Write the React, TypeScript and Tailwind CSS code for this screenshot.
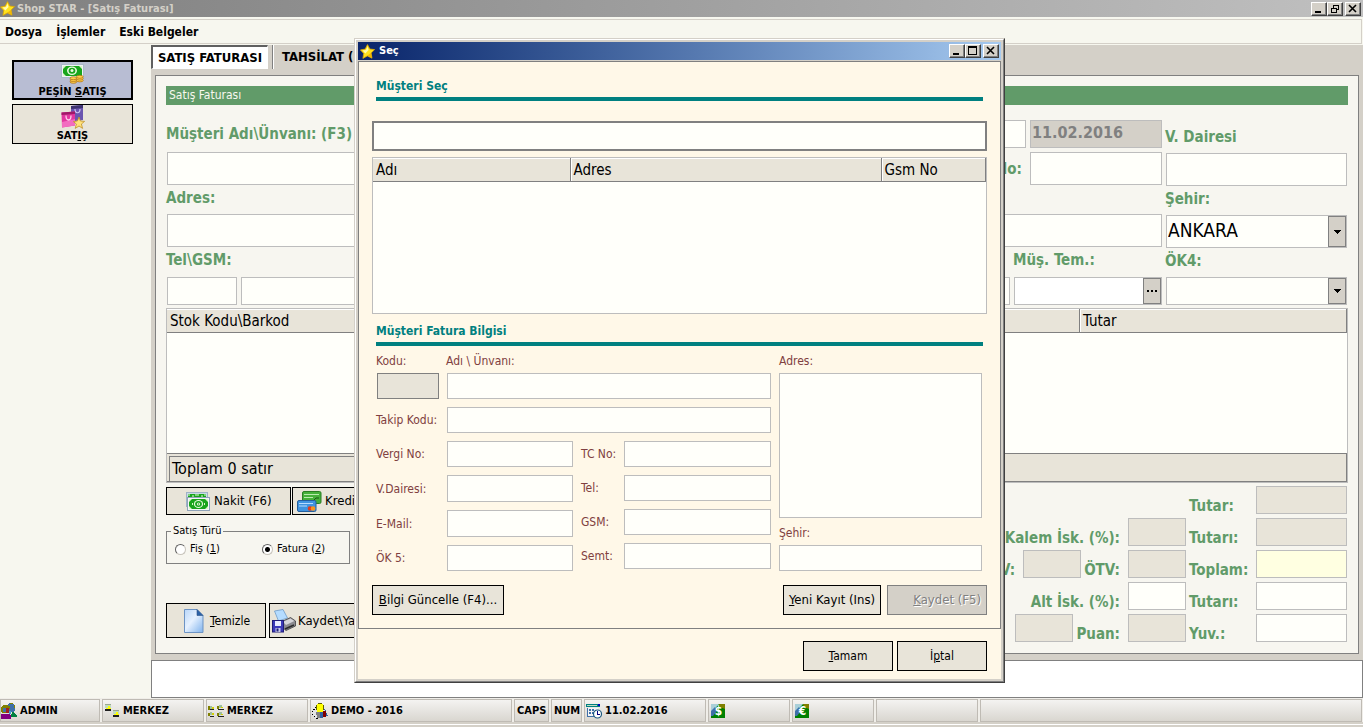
import { useState } from 'react';
import type { ReactNode } from 'react';
import clsx from 'clsx';

const FIELD = 'block min-w-0 rounded-none border border-[#bdbdbd] bg-[#fffffa] px-1 outline-none';
const FIELD_DISABLED = 'block min-w-0 rounded-none border border-[#bdbdbd] bg-[#e8e4d9] px-1 outline-none';
const GREEN = 'text-[15px] leading-4 font-bold whitespace-nowrap text-[#619b69]';
const BROWN = 'block text-xs leading-4 whitespace-nowrap text-[#804040]';
const PUSH = 'flex items-center border border-black bg-[#e8e4d9] whitespace-nowrap';

/* ---------- icons ---------- */

function StarIcon() {
  return (
    <svg width="15" height="15" viewBox="0 0 15 15" className="shrink-0">
      <path d="M7.5 0.6 9.8 5 14.6 5.6 11.1 9 12 14.2 7.4 11.9 2.9 14.4 3.7 9.4 0.4 5.9 5.2 5.1Z" fill="#ffe21c" stroke="#d9a406" strokeWidth="0.8" />
      <path d="M7.4 2.4 8.6 6 5.4 9.4 2.6 6.6 6 6.1Z" fill="#fffbb0" />
      <path d="M11 9 11.8 13.8 7.4 11.6Z" fill="#f2b705" />
    </svg>
  );
}

function CashCoinsIcon() {
  return (
    <svg width="23" height="20" viewBox="0 0 23 20" className="mb-px shrink-0">
      <rect x="0.5" y="0.5" width="22" height="13" fill="#eef3f4" stroke="#a9b7c9" />
      <rect x="2" y="2" width="19" height="10" fill="#18a51c" />
      <path d="M2 2h3L2 5zM21 2h-3l3 3zM2 12h3L2 9z" fill="#d8f5c8" />
      <ellipse cx="11" cy="6.8" rx="5" ry="4.2" fill="#e9fbe0" />
      <ellipse cx="11" cy="6.8" rx="3.4" ry="3" fill="#18a51c" />
      <circle cx="11" cy="6.6" r="1.5" fill="#e9fbe0" />
      <g fill="#ffcf4a" stroke="#a86a14" strokeWidth="0.7">
        <ellipse cx="12.4" cy="17.8" rx="3.4" ry="1.5" />
        <ellipse cx="12.4" cy="16" rx="3.4" ry="1.5" />
        <ellipse cx="12.4" cy="14.2" rx="3.4" ry="1.5" />
        <ellipse cx="18.8" cy="16.4" rx="3.4" ry="1.5" />
        <ellipse cx="18.8" cy="14.6" rx="3.4" ry="1.5" />
        <ellipse cx="18.8" cy="12.8" rx="3.4" ry="1.5" />
      </g>
    </svg>
  );
}

function BagsIcon() {
  return (
    <svg width="24" height="24" viewBox="0 0 24 24" className="shrink-0">
      <path d="M10 1 22 0v15l-8 1-4-8z" fill="#6a55b0" />
      <path d="M10 1 22 0v3L10 4z" fill="#3d3370" />
      <path d="M14 4c0 5 5 5 5 0" fill="none" stroke="#cfc4f0" strokeWidth="1.2" />
      <path d="M0.5 7.5 14 6.5v14L1 22.5z" fill="#e2369f" />
      <path d="M0.5 7.5 14 6.5v2.6L0.5 10z" fill="#a01868" />
      <path d="M1 17 14 14v6.5L1 22.5z" fill="#f26cc0" />
      <path d="M5 10.5c0 6 5 6 5 0" fill="none" stroke="#ffd0ee" strokeWidth="1.3" />
      <path d="M18 12 19.4 16 23.6 16.4 20.4 19 21.6 23.4 18 21 14.2 23.4 15.4 19 12.4 16.6 16.4 16Z" fill="#ffe27a" stroke="#c0902a" strokeWidth="0.8" />
    </svg>
  );
}

function BanknoteIcon() {
  return (
    <svg width="24" height="19" viewBox="0 0 24 19" className="shrink-0">
      <rect x="0.5" y="0.5" width="21" height="14" fill="#c9dbe6" stroke="#9fb2c6" />
      <rect x="2" y="2" width="18" height="4" fill="#18a51c" />
      <path d="M2 3h2M6 4h2M9 3h4M15 4h2M18 3h2" stroke="#e5fbdc" />
      <rect x="1.5" y="5.5" width="22" height="13" fill="#f4f7f7" stroke="#8fa2b8" />
      <rect x="3" y="7" width="19" height="10" fill="#18a51c" />
      <path d="M3 7h3L3 10zM22 7h-3l3 3zM3 17h3L3 14zM22 17h-3l3-3zM6 11h1v2H6zM18 11h1v2h-1z" fill="#d8f5c8" />
      <ellipse cx="12.5" cy="12" rx="4.6" ry="4" fill="#e9fbe0" />
      <ellipse cx="12.5" cy="12" rx="3.4" ry="3" fill="#18a51c" />
      <circle cx="12.5" cy="12" r="1.6" fill="#e9fbe0" />
      <circle cx="12.5" cy="12" r="0.7" fill="#18a51c" />
    </svg>
  );
}

function CardsIcon() {
  return (
    <svg width="25" height="21" viewBox="0 0 25 21" className="shrink-0">
      <rect x="5.5" y="0.5" width="18.5" height="12" rx="1.5" fill="#45b03a" stroke="#2a7d24" />
      <path d="M7 3.5h15M7 6.5h9" stroke="#b9ecae" />
      <path d="m17 9 2-2h3" stroke="#1b5717" fill="none" />
      <rect x="0.5" y="9.5" width="18.5" height="11" rx="1.5" fill="#3f93e0" stroke="#245f9e" />
      <path d="M2 12.5h14M2 15h8" stroke="#b7dcff" />
      <circle cx="13" cy="17.5" r="2.3" fill="#e23a1c" />
      <circle cx="16" cy="17.5" r="2.3" fill="#f7941d" />
    </svg>
  );
}

function PageIcon() {
  return (
    <svg width="20" height="24" viewBox="0 0 20 24" className="shrink-0">
      <defs>
        <linearGradient id="page" x1="0" y1="0" x2="1" y2="1">
          <stop offset="0" stopColor="#b9d6f8" />
          <stop offset="0.45" stopColor="#e6f1ff" />
          <stop offset="1" stopColor="#7fb2ec" />
        </linearGradient>
      </defs>
      <path d="M0.5 0.5H13l6 6v17H0.5z" fill="url(#page)" stroke="#6d93c4" />
      <path d="M13 0.5v6h6z" fill="#2b62a8" stroke="#2b5288" strokeWidth="0.6" />
    </svg>
  );
}

function SavePrintIcon() {
  return (
    <svg width="24" height="24" viewBox="0 0 24 24" className="shrink-0">
      <path d="M2.5 2 11 0.5 15.5 9l-9 3z" fill="#b5dcff" stroke="#6f9bc8" strokeWidth="0.8" />
      <path d="M10 12.5 18.5 8.5 23.5 12v5L14 21.5 10 18z" fill="#8b8b90" stroke="#3d3d40" strokeWidth="0.8" />
      <path d="M11 12.8 18.5 9.4 22.4 12 14 16z" fill="#d5d5da" />
      <path d="m13 20 9-4" stroke="#2b2b2b" strokeWidth="1.4" />
      <rect x="0.5" y="11.5" width="11" height="11.5" fill="#3b39b8" stroke="#1f1d78" />
      <rect x="3" y="12" width="6" height="5" fill="#e8ecff" />
      <rect x="3.5" y="19" width="5" height="4" fill="#c7cbe8" />
      <rect x="4.5" y="19.5" width="2" height="3" fill="#1f1d78" />
    </svg>
  );
}

function UsersIcon() {
  return (
    <svg width="16" height="16" viewBox="0 0 16 16" shapeRendering="crispEdges" className="shrink-0">
      <path d="M8 0h4l2 3v4l-2 2H9L7 6V2z" fill="#3f6fa8" />
      <path d="M9 0h3v1H9zM13 2h1v3h-1zM8 3h1v3H8z" fill="#808000" />
      <path d="M11 9h2l3 4v1h-6z" fill="#008040" />
      <path d="M0 4 3 2h3l2 2v3l-3 3H1L0 8z" fill="#808000" />
      <path d="M5 5h3v5H5z" fill="#a02020" />
      <path d="M2 5h3v4H2z" fill="#3f6fa8" />
      <path d="M8 8h2v3H8z" fill="#40a0d0" />
      <path d="M0 11h8l2 2v3H0z" fill="#800080" />
    </svg>
  );
}

function TwoHostsIcon() {
  return (
    <svg width="16" height="16" viewBox="0 0 16 16" shapeRendering="crispEdges" className="shrink-0">
      <path d="M1 1h6v4H1zM9 7h6v4H9z" fill="#c0dcc0" />
      <path d="M4 3h2v2H4zM12 9h2v2h-2z" fill="#ffff00" />
      <path d="M1 1h6v1H1zM9 7h6v1H9z" fill="#9aa890" />
      <path d="M1 6h6v2H1zM9 12h6v2H9z" fill="#202020" />
      <path d="M2 5h5v1H2zM10 11h5v1h-5z" fill="#ffff00" />
    </svg>
  );
}

function FourHostsIcon() {
  return (
    <svg width="16" height="12" viewBox="0 0 16 12" shapeRendering="crispEdges" className="shrink-0">
      <path d="M0 1h2v4H0zM9 1h2v3H9zM0 8h2v3H0zM9 8h2v3H9z" fill="#808000" />
      <path d="M2 1h2v3H2zM11 0h3v3h-3zM2 7h2v3H2zM11 7h3v3h-3z" fill="#9fc0a0" />
      <path d="M4 2h2v2H4zM13 2h2v1h-2zM4 8h2v2H4zM13 9h2v1h-2z" fill="#d0d000" />
      <path d="M2 4h4v1H2zM10 4h6v1h-6zM2 11h4v1H2zM10 11h6v1h-6z" fill="#202020" />
    </svg>
  );
}

function CubeIcon() {
  return (
    <svg width="16" height="16" viewBox="0 0 16 16" shapeRendering="crispEdges" className="shrink-0">
      <path d="M1 7h4l3 3v5H3L0 12z" fill="#e4e4e4" />
      <path d="M0 8h1v1H0zM0 11h1v1H0zM1 6h2v1H1zM3 4h1v1H3zM2 13h1v1H2zM4 15h2v1H4z" fill="#000" />
      <path d="M4 9h5v6H5z" fill="#808080" />
      <path d="M8 9h3v6H8z" fill="#3060a0" />
      <path d="M11 8h3v6h-3z" fill="#800000" />
      <path d="M12 6h1l3 7h-2V9z" fill="#3060a0" />
      <path d="M5 1h6v8H5z" fill="#ffff00" />
      <path d="M6 0h4v1H6zM4 2h1v5H4zM11 2h1v5h-1z" fill="#606000" />
    </svg>
  );
}

function CalendarIcon() {
  return (
    <svg width="16" height="16" viewBox="0 0 16 16" shapeRendering="crispEdges" className="shrink-0">
      <path d="M0 1h14v3H0z" fill="#008080" />
      <path d="M1 2h10v1H1z" fill="#c0dcc0" />
      <path d="M12 1h2v2h-2z" fill="#0000c0" />
      <path d="M1 5h11v9H1z" fill="#f4f4f4" />
      <path d="M1 5h1v9H1zM1 13h9v1H1zM3 6h2v2H3zM6 6h2v2H6zM3 9h2v2H3zM6 9h2v2H6z" fill="#3f6fa8" />
      <circle cx="11.5" cy="11" r="4" fill="#fff" stroke="#1e5a80" strokeWidth="1.2" shapeRendering="auto" />
      <path d="M11 8h1v3h2v1h-3z" fill="#000080" />
    </svg>
  );
}

function CurrencyIcon({ sign }: { sign: string }) {
  return (
    <svg width="14" height="14" viewBox="0 0 14 14" className="shrink-0">
      <rect width="14" height="14" fill="#008000" />
      <path d="M0 0h8L0 9z" fill="#a9cfd8" />
      <path d="M8 0h6v5L9 3z" fill="#808000" />
      <path d="M0 7 4 3l2 4-4 5H0z" fill="#3f6fa8" />
      <text x="7.5" y="11" textAnchor="middle" fontSize="12" fontWeight="700" fill="#fff">{sign}</text>
    </svg>
  );
}

/* ---------- window chrome ---------- */

function ChromeButton({ label, children }: { label: string; children: ReactNode }) {
  return (
    <button
      type="button"
      aria-label={label}
      className="flex h-[14px] w-4 items-center justify-center border-t border-r border-b border-l border-t-white border-r-[#404040] border-b-[#404040] border-l-white bg-[#d4d0c8] shadow-[inset_-1px_-1px_0_#808080]"
    >
      <svg width="10" height="10" viewBox="0 0 10 10" shapeRendering="crispEdges" fill="none" stroke="#000">
        {children}
      </svg>
    </button>
  );
}

function ChromeButtons({ restored }: { restored?: boolean }) {
  return (
    <div className="ml-auto flex items-center">
      <ChromeButton label="Simge durumuna küçült">
        <path d="M1 8h6" strokeWidth="2" />
      </ChromeButton>
      {restored ? (
        <ChromeButton label="Önceki boyut">
          <path d="M3 1h6M3.5 1v3M8.5 1v5M6 5.5h3" />
          <path d="M1 4.5h6M1.5 4v5M6.5 4v5M1 8.5h6" />
        </ChromeButton>
      ) : (
        <ChromeButton label="Ekranı kapla">
          <path d="M0 1h9" strokeWidth="2" />
          <path d="M0.5 1v8M8.5 1v8M0 8.5h9" />
        </ChromeButton>
      )}
      <span className="w-0.5" />
      <ChromeButton label="Kapat">
        <path d="m1 1 7 7M8 1 1 8" strokeWidth="1.6" shapeRendering="auto" />
      </ChromeButton>
    </div>
  );
}

/* ---------- shared controls ---------- */

function Combo({ label, value, className }: { label: string; value?: string; className: string }) {
  return (
    <div className={clsx('relative border border-[#bdbdbd] bg-[#fffffa]', className)}>
      <select aria-label={label} className="block h-full w-full appearance-none pb-1 pl-px text-[19px] leading-6 outline-none">
        <option>{value}</option>
      </select>
      <span className="pointer-events-none absolute inset-y-0 right-0 flex w-[18px] items-center justify-center border border-[#808080] bg-[#d4d0c8]">
        <svg width="7" height="4" viewBox="0 0 7 4" shapeRendering="crispEdges">
          <path d="M0 0h7v1H0zM1 1h5v1H1zM2 2h3v1H2zM3 3h1v1H3z" />
        </svg>
      </span>
    </div>
  );
}

function GridHead({ columns }: { columns: { title: string; width?: string }[] }) {
  return (
    <table className="w-full table-fixed border-collapse text-left">
      <thead>
        <tr className="h-[23px] border-t border-r border-b border-t-white border-r-[#808080] border-b-[#808080] bg-[#e8e4d9]">
          {columns.map((c, i) => (
            <th
              key={c.title}
              className={clsx('p-0 pl-[3px] text-[15px] leading-5 font-normal', c.width, i > 0 && 'border-l border-[#808080] shadow-[inset_1px_0_0_#fff]')}
            >
              {c.title}
            </th>
          ))}
        </tr>
      </thead>
      <tbody />
    </table>
  );
}

/* ---------- main window ---------- */

function Sidebar() {
  return (
    <aside className="flex w-[151px] shrink-0 flex-col gap-1 bg-[#f7f7ef] pt-[15px] pl-3 text-[11px] font-bold">
      <button type="button" className="flex h-10 w-[121px] flex-col items-center justify-end border-2 border-black bg-[#b8bdd3] leading-[13px]">
        <CashCoinsIcon />
        <span>PEŞİN <u>S</u>ATIŞ</span>
      </button>
      <button type="button" className="flex h-10 w-[121px] flex-col items-center justify-end border border-black bg-[#e8e4d9] leading-[14px]">
        <BagsIcon />
        <span>SAT<u>I</u>Ş</span>
      </button>
    </aside>
  );
}

function InvoiceForm() {
  return (
    <div className="mr-px mt-[15px] flex gap-[3px]">
      <div className="flex min-w-0 flex-1 flex-col">
        <div className="flex h-7 items-center gap-1">
          <label htmlFor="musteri" className={clsx(GREEN, 'flex-1')}>Müşteri Adı\Ünvanı: (F3)</label>
          <input aria-label="Belge" className={clsx(FIELD, 'h-7 w-[132px]')} />
          <input
            aria-label="Tarih"
            disabled
            defaultValue="11.02.2016"
            className="h-7 w-[132px] border border-[#bdbdbd] bg-[#d4d0c8] pb-1 pl-px text-base font-bold text-[#808080]"
          />
        </div>
        <div className="mt-1 ml-px flex items-center">
          <input id="musteri" className={clsx(FIELD, 'h-[33px] flex-1')} />
          <label htmlFor="vergi-no" className={clsx(GREEN, 'mx-2')}>Vergi No:</label>
          <input id="vergi-no" className={clsx(FIELD, 'h-[33px] w-[132px]')} />
        </div>
        <label htmlFor="adres" className={clsx(GREEN, 'flex h-[29px] items-center pb-1')}>Adres:</label>
        <div className="flex pl-px">
          <input id="adres" className={clsx(FIELD, 'h-[33px] flex-1')} />
        </div>
        <div className="ml-px grid grid-cols-[70px_1fr_148px] gap-x-1">
          <label htmlFor="tel" className={clsx(GREEN, 'col-span-2 -ml-px flex h-[30px] items-center pb-1')}>Tel\GSM:</label>
          <label htmlFor="temsilci" className={clsx(GREEN, '-ml-px flex h-[30px] items-center pb-1')}>Müş. Tem.:</label>
          <input id="tel" className={clsx(FIELD, 'h-7')} />
          <input aria-label="GSM" className={clsx(FIELD, 'h-7')} />
          <div className="flex h-7 border border-[#bdbdbd] bg-white">
            <input id="temsilci" className="min-w-0 flex-1 px-1 outline-none" />
            <button type="button" aria-label="Temsilci seç" className="flex w-[18px] items-center justify-center border border-[#808080] bg-[#d4d0c8]">
              <svg width="10" height="2" viewBox="0 0 10 2" shapeRendering="crispEdges">
                <path d="M0 0h2v2H0zM4 0h2v2H4zM8 0h2v2H8z" />
              </svg>
            </button>
          </div>
        </div>
      </div>

      <div className="flex w-[182px] flex-col">
        <label htmlFor="vergi-dairesi" className={clsx(GREEN, 'flex h-[33px] items-center')}>V. Dairesi</label>
        <input id="vergi-dairesi" className={clsx(FIELD, 'ml-px h-[33px]')} />
        <span className={clsx(GREEN, 'flex h-[29px] items-center pb-1')}>Şehir:</span>
        <Combo label="Şehir" value="ANKARA" className="ml-px h-[33px]" />
        <span className={clsx(GREEN, 'flex h-[29px] items-center pb-1')}>ÖK4:</span>
        <Combo label="ÖK4" className="ml-px h-7" />
      </div>
    </div>
  );
}

function Totals() {
  const rows: { label: string; tone: string; left: ReactNode }[] = [
    { label: 'Tutar:', tone: 'bg-[#e8e4d9]', left: null },
    {
      label: 'Tutarı:',
      tone: 'bg-[#e8e4d9]',
      left: (
        <>
          <span className={GREEN}>Kalem İsk. (%):</span>
          <input aria-label="Kalem iskonto" disabled className={clsx(FIELD_DISABLED, 'ml-2 h-7 w-[58px]')} />
        </>
      ),
    },
    {
      label: 'Toplam:',
      tone: 'bg-[#ffffe1]',
      left: (
        <>
          <span className={GREEN}>KDV:</span>
          <input aria-label="KDV" disabled className={clsx(FIELD_DISABLED, 'mr-[3px] ml-2 h-7 w-[58px]')} />
          <span className={GREEN}>ÖTV:</span>
          <input aria-label="ÖTV" disabled className={clsx(FIELD_DISABLED, 'ml-2 h-7 w-[58px]')} />
        </>
      ),
    },
    {
      label: 'Tutarı:',
      tone: 'bg-[#fffffa]',
      left: (
        <>
          <span className={GREEN}>Alt İsk. (%):</span>
          <input aria-label="Alt iskonto" className={clsx(FIELD, 'ml-2 h-7 w-[58px]')} />
        </>
      ),
    },
    {
      label: 'Yuv.:',
      tone: 'bg-[#fffffa]',
      left: (
        <>
          <input aria-label="Kart puanı" disabled className={clsx(FIELD_DISABLED, 'mr-[3px] h-7 w-[58px]')} />
          <span className={GREEN}>Puan:</span>
          <input aria-label="Puan" disabled className={clsx(FIELD_DISABLED, 'ml-2 h-7 w-[58px]')} />
        </>
      ),
    },
  ];

  return (
    <div className="mr-px ml-auto flex flex-col gap-1">
      {rows.map((r, i) => (
        <div key={i} className="flex h-7 items-end justify-end">
          {r.left}
          <span className={clsx(GREEN, 'ml-[3px] w-[67px]')}>{r.label}</span>
          <input aria-label={r.label} className={clsx('h-7 w-[91px] border border-[#bdbdbd] px-1', r.tone)} />
        </div>
      ))}
    </div>
  );
}

function SaleType() {
  const [type, setType] = useState('fatura');
  const radio =
    'size-[11px] appearance-none rounded-full border border-t-[#606060] border-r-[#c8c4bc] border-b-[#c8c4bc] border-l-[#606060] bg-white checked:bg-[radial-gradient(circle,#000_0_2px,#fff_3px)]';
  return (
    <fieldset className="mt-[9px] h-10 w-[184px] border border-[#808080] px-2 text-[11px] leading-[14px]">
      <legend className="-ml-1 px-0.5">Satış Türü</legend>
      <div className="mt-1 flex">
        <label className="flex w-[87px] items-center gap-1">
          <input type="radio" name="tur" className={radio} checked={type === 'fis'} onChange={() => setType('fis')} />
          <span>Fiş (<u>1</u>)</span>
        </label>
        <label className="flex items-center gap-1">
          <input type="radio" name="tur" className={radio} checked={type === 'fatura'} onChange={() => setType('fatura')} />
          <span>Fatura (<u>2</u>)</span>
        </label>
      </div>
    </fieldset>
  );
}

function InvoicePanel() {
  return (
    <section className="mx-1 flex flex-1 flex-col border border-[#808080] bg-[#f7f6f0] p-[10px] pb-[11px]">
      <h1 className="h-[19px] bg-[#619b69] pl-[3px] text-xs leading-[19px] text-[#f7f7ef]">Satış Faturası</h1>
      <InvoiceForm />

      <div className="mt-[3px] flex flex-1 flex-col border border-[#bdbdbd] bg-[#fffffa]">
        <GridHead columns={[{ title: 'Stok Kodu\\Barkod' }, { title: 'Tutar', width: 'w-[267px]' }]} />
        <div className="mt-auto flex h-[29px] border-t border-r border-b border-[#808080] bg-[#e8e4d9] pt-0.5 pl-0.5">
          <p className="w-[400px] border-t border-l border-[#808080] pl-[2px] text-base leading-6">Toplam 0 satır</p>
        </div>
      </div>

      <div className="mt-[3px] flex">
        <div className="mt-px flex flex-col">
          <div className="flex gap-px text-[13px]">
            <button type="button" className={clsx(PUSH, 'h-7 w-[125px] gap-1 pl-[19px]')}>
              <BanknoteIcon />
              Nakit (F6)
            </button>
            <button type="button" className={clsx(PUSH, 'h-7 w-[125px] gap-[3px] pl-1')}>
              <CardsIcon />
              Kredi Kartı
            </button>
          </div>
          <SaleType />
          <div className="mt-auto mb-1 flex gap-[3px]">
            <button type="button" className={clsx(PUSH, 'h-[35px] w-[100px] gap-[6px] pl-[17px] text-xs')}>
              <PageIcon />
              <span><u>T</u>emizle</span>
            </button>
            <button type="button" className={clsx(PUSH, 'h-[35px] w-[130px] gap-[2px] pl-[2px] text-[13px]')}>
              <SavePrintIcon />
              Kaydet\Yazdır
            </button>
          </div>
        </div>
        <Totals />
      </div>
    </section>
  );
}

function StatusBar() {
  const cells: { width: string; icon?: ReactNode; text?: string }[] = [
    { width: 'w-[100px]', icon: <UsersIcon />, text: 'ADMIN' },
    { width: 'w-[102px] pl-px', icon: <TwoHostsIcon />, text: 'MERKEZ' },
    { width: 'w-[102px] pl-px', icon: <FourHostsIcon />, text: 'MERKEZ' },
    { width: 'w-[202px] pl-px', icon: <CubeIcon />, text: 'DEMO - 2016' },
    { width: 'w-[35px] pl-[2px]', text: 'CAPS' },
    { width: 'w-[31px] pl-[2px]', text: 'NUM' },
    { width: 'w-[122px] pl-px', icon: <CalendarIcon />, text: '11.02.2016' },
    { width: 'w-[82px] pl-[2px]', icon: <CurrencyIcon sign="$" /> },
    { width: 'w-[82px] pl-[2px]', icon: <CurrencyIcon sign="€" /> },
    { width: 'w-[102px]' },
    { width: 'flex-1' },
  ];
  return (
    <footer className="border-b-2 border-[#d4d0c8] bg-white pb-px">
      <div className="flex gap-0.5 border-b-2 border-[#d4d0c8] bg-[#f0eee9] pt-px pr-px">
        {cells.map((c, i) => (
          <div
            key={i}
            className={clsx(
              'flex h-[23px] items-center gap-[3px] border border-[#bfbbb4] bg-linear-to-b from-[#f4f3f1] to-[#d9d6d0] text-[11px] font-bold whitespace-nowrap',
              c.width,
            )}
          >
            {c.icon}
            {c.text && <span className="pt-0.5">{c.text}</span>}
          </div>
        ))}
      </div>
    </footer>
  );
}

/* ---------- customer dialog ---------- */

function Heading({ children }: { children: ReactNode }) {
  return (
    <h2 className="mx-1 border-b-4 border-[#008080] pb-[3px] text-xs leading-4 font-bold text-[#008080]">{children}</h2>
  );
}

function CustomerDialog() {
  const leftRows = [
    { id: 'd-vergi', label: 'Vergi No:', height: 'h-[26px]' },
    { id: 'd-vdaire', label: 'V.Dairesi:', height: 'h-[27px]' },
    { id: 'd-mail', label: 'E-Mail:', height: 'h-[27px]' },
    { id: 'd-ok5', label: 'ÖK 5:', height: 'h-[26px]' },
  ];
  const rightRows = [
    { id: 'd-tc', label: 'TC No:' },
    { id: 'd-tel', label: 'Tel:' },
    { id: 'd-gsm', label: 'GSM:' },
    { id: 'd-semt', label: 'Semt:' },
  ];

  return (
    <div
      role="dialog"
      aria-label="Seç"
      className="absolute top-[38px] left-[354px] w-[651px] border border-t-[#d4d0c8] border-r-[#404040] border-b-[#404040] border-l-[#d4d0c8]"
    >
      <div className="border border-t-white border-r-[#808080] border-b-[#808080] border-l-white">
        <div className="border-2 border-[#d4d0c8] bg-[#fff8e8]">
          <div className="flex h-[18px] items-center gap-1 bg-linear-to-r from-[#0a246a] to-[#a6caf0] pr-0.5 pl-[2px] text-[11px] font-bold text-white">
            <StarIcon />
            Seç
            <ChromeButtons />
          </div>
          <div className="h-px bg-[#d4d0c8]" />

          <div className="border border-[#808080] px-[13px] pt-4 pb-[13px]">
            <Heading>Müşteri Seç</Heading>
            <input aria-label="Müşteri ara" className="mt-5 block h-[30px] w-full border-2 border-[#808080] bg-[#fffffa] px-1 outline-none" />
            <div className="mt-[6px] h-[157px] border border-[#bdbdbd] bg-[#fffffa]">
              <GridHead
                columns={[
                  { title: 'Adı', width: 'w-[197px]' },
                  { title: 'Adres', width: 'w-[311px]' },
                  { title: 'Gsm No' },
                ]}
              />
            </div>

            <div className="mt-[9px]">
              <Heading>Müşteri Fatura Bilgisi</Heading>
            </div>

            <div className="mr-[5px] ml-1 mt-[7px] flex gap-2">
              <div className="w-[395px]">
                <div className="flex gap-[7px]">
                  <div className="w-[63px]">
                    <label htmlFor="d-kod" className={BROWN}>Kodu:</label>
                    <div className="mt-1 pl-px">
                      <input id="d-kod" disabled className="block h-[26px] w-full border border-[#808080] bg-[#e8e4d9]" />
                    </div>
                  </div>
                  <div className="flex-1">
                    <label htmlFor="d-unvan" className={BROWN}>Adı \ Ünvanı:</label>
                    <div className="mt-1 pl-px">
                      <input id="d-unvan" className={clsx(FIELD, 'h-[26px] w-full')} />
                    </div>
                  </div>
                </div>
                <div className="mt-2 flex items-center">
                  <label htmlFor="d-takip" className={clsx(BROWN, 'w-[71px]')}>Takip Kodu:</label>
                  <input id="d-takip" className={clsx(FIELD, 'h-[26px] flex-1')} />
                </div>
                <div className="mt-2 flex justify-between">
                  <div className="flex flex-col gap-2">
                    {leftRows.map(r => (
                      <div key={r.id} className="flex items-center">
                        <label htmlFor={r.id} className={clsx(BROWN, 'w-[71px]')}>{r.label}</label>
                        <input id={r.id} className={clsx(FIELD, 'w-[126px]', r.height)} />
                      </div>
                    ))}
                  </div>
                  <div className="flex flex-col gap-2">
                    {rightRows.map(r => (
                      <div key={r.id} className="flex items-center">
                        <label htmlFor={r.id} className={clsx(BROWN, 'w-[43px]')}>{r.label}</label>
                        <input id={r.id} className={clsx(FIELD, 'h-[26px] w-[147px]')} />
                      </div>
                    ))}
                  </div>
                </div>
              </div>

              <div className="flex flex-1 flex-col">
                <label htmlFor="d-adres" className={clsx(BROWN, 'h-5')}>Adres:</label>
                <textarea id="d-adres" className={clsx(FIELD, 'w-full flex-1 resize-none')} />
                <label htmlFor="d-sehir" className={clsx(BROWN, 'mt-[7px] mb-1')}>Şehir:</label>
                <input id="d-sehir" className={clsx(FIELD, 'h-[26px]')} />
              </div>
            </div>

            <div className="mt-[14px] flex text-[13px]">
              <button type="button" className={clsx(PUSH, 'h-[30px] w-[132px] justify-center')}>
                <span><u>B</u>ilgi Güncelle (F4)...</span>
              </button>
              <button type="button" className={clsx(PUSH, 'ml-auto h-[30px] w-[98px] justify-center')}>
                <span><u>Y</u>eni Kayıt (Ins)</span>
              </button>
              <button
                type="button"
                disabled
                className="ml-[6px] flex h-[30px] w-[100px] items-center justify-end border border-[#808080] bg-[#d4d0c8] pr-[5px] text-[#808080] [text-shadow:1px_1px_0_#fff]"
              >
                <span><u>K</u>aydet (F5)</span>
              </button>
            </div>
          </div>

          <div className="flex justify-end gap-1 px-[14px] pt-3 pb-2 text-xs">
            <button type="button" className={clsx(PUSH, 'h-[30px] w-[90px] justify-center')}>
              <span><u>T</u>amam</span>
            </button>
            <button type="button" className={clsx(PUSH, 'h-[30px] w-[90px] justify-center')}>
              <span>İ<u>p</u>tal</span>
            </button>
          </div>
        </div>
      </div>
    </div>
  );
}

export default function App() {
  return (
    <div className="relative flex min-h-screen flex-col bg-[#f7f7ef] font-['DejaVu_Sans_Condensed','Noto_Sans',sans-serif] text-black">
      <header className="flex h-[17px] items-center gap-0.5 bg-linear-to-r from-[#808080] to-[#c0c0c0] pr-0.5 text-[11px] leading-4 font-bold text-[#d4d0c8]">
        <StarIcon />
        Shop STAR - [Satış Faturası]
        <ChromeButtons restored />
      </header>
      <nav className="mt-0.5 mr-px mb-px flex h-[25px] items-center gap-[14px] border-y border-r border-[#d4d0c8] pl-[5px] text-xs font-bold">
        <button type="button">Dosya</button>
        <button type="button">İşlemler</button>
        <button type="button">Eski Belgeler</button>
      </nav>

      <div className="flex flex-1">
        <Sidebar />
        <main className="flex min-w-0 flex-1 flex-col">
          <div className="flex flex-1 flex-col bg-[#d4d0c8] pb-[6px]">
            <div role="tablist" className="mb-[6px] flex h-6 text-[13px] font-bold whitespace-nowrap">
              <button type="button" role="tab" aria-selected="true" className="w-[117px] border-t-2 border-r border-b border-l-2 border-t-[#606060] border-r-white border-b-white border-l-[#606060] bg-white">
                SATIŞ FATURASI
              </button>
              <button type="button" role="tab" aria-selected="false" className="ml-1 border-l border-[#808080] pl-[9px] shadow-[inset_1px_0_0_#fff]">
                TAHSİLAT (F8)
              </button>
            </div>
            <InvoicePanel />
          </div>
          <textarea aria-label="Açıklama" className="block h-[38px] w-full resize-none border border-[#808080] bg-white" />
        </main>
      </div>

      <StatusBar />
      <CustomerDialog />
    </div>
  );
}
